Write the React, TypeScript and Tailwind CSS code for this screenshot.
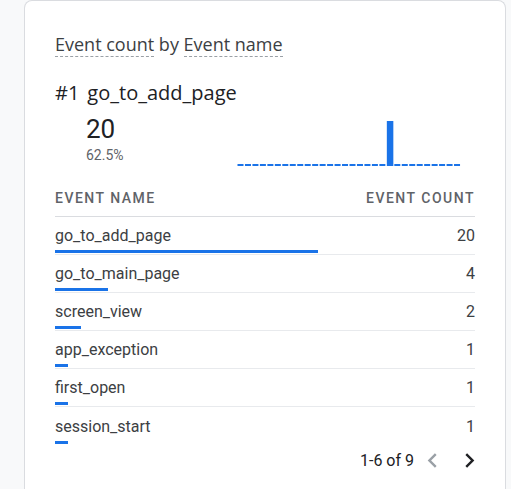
import React from 'react';
import { MdChevronLeft, MdChevronRight } from 'react-icons/md';

interface EventRow {
  name: string;
  count: number;
}

const rows: EventRow[] = [
  { name: 'go_to_add_page', count: 20 },
  { name: 'go_to_main_page', count: 4 },
  { name: 'screen_view', count: 2 },
  { name: 'app_exception', count: 1 },
  { name: 'first_open', count: 1 },
  { name: 'session_start', count: 1 },
];

const total = 32;

// 30 day sparkline, only one day has data
const Sparkline: React.FC = () => {
  const slots = 30;
  const w = 224;
  const pitch = w / slots;
  const peak = 20;
  return (
    <svg width={w} height={46} viewBox={`0 0 ${w} 46`} className="block">
      {Array.from({ length: slots }).map((_, i) =>
        i === peak ? (
          <rect key={i} x={i * pitch + 0.5} y={0} width={6.5} height={45} fill="#1a73e8" />
        ) : (
          <rect key={i} x={i * pitch + 0.5} y={43} width={6} height={2} fill="#1a73e8" />
        )
      )}
    </svg>
  );
};

export default function App() {
  return (
    <div className="min-h-[489px] bg-[#f8f9fa] pl-[24px] pr-[5px] font-['Roboto',sans-serif]">
      <div className="bg-white border border-[#dadce0] rounded-t-[8px] border-b-0 h-[489px] px-[30px] pt-[31px]">
        <div className="text-[18px] leading-[24px] text-[#3c4043] font-['Open_Sans',sans-serif]">
          <span className="border-b-[1.5px] border-dashed border-[#9aa0a6]">Event count</span>
          <span> by </span>
          <span className="border-b-[1.5px] border-dashed border-[#9aa0a6]">Event name</span>
        </div>

        <div className="mt-[24px] text-[20px] leading-[26px] text-[#202124] flex gap-[8px] font-['Open_Sans',sans-serif]">
          <span>#1</span>
          <span>go_to_add_page</span>
        </div>

        <div className="flex items-start mt-[4px]">
          <div className="pl-[31px] w-[182px]">
            <div className="text-[26px] leading-[32px] text-[#202124] mt-[3px]">20</div>
            <div className="text-[14px] leading-[18px] text-[#5f6368] mt-[1px]">62.5%</div>
          </div>
          <div className="mt-[11px]">
            <Sparkline />
          </div>
        </div>

        <div className="mt-[21px] flex justify-between items-center text-[14px] leading-[20px] tracking-[1.5px] font-medium text-[#5f6368] pb-[8px] border-b border-[#dadce0]">
          <span>EVENT NAME</span>
          <span>EVENT COUNT</span>
        </div>

        {rows.map((r, i) => (
          <div
            key={r.name}
            className={`flex flex-col h-[38px] ${i < rows.length - 1 ? 'border-b border-[#e8eaed]' : ''}`}
          >
            <div className="flex-1 flex items-center justify-between text-[16px] text-[#3c4043] pt-[5px]">
              <span>{r.name}</span>
              <span>{r.count}</span>
            </div>
            <div className="h-[3px] mb-[1px] bg-[#1a73e8]" style={{ width: `${(r.count / total) * 100}%` }} />
          </div>
        ))}

        <div className="flex items-center justify-end mt-[1px] text-[16px] text-[#202124]">
          <span className="mr-[4px]">1-6 of 9</span>
          <MdChevronLeft size={29} className="text-[#9aa0a6]" />
          <span className="w-[8px]" />
          <MdChevronRight size={29} className="text-[#202124] -mr-[9px]" />
        </div>
      </div>
    </div>
  );
}
